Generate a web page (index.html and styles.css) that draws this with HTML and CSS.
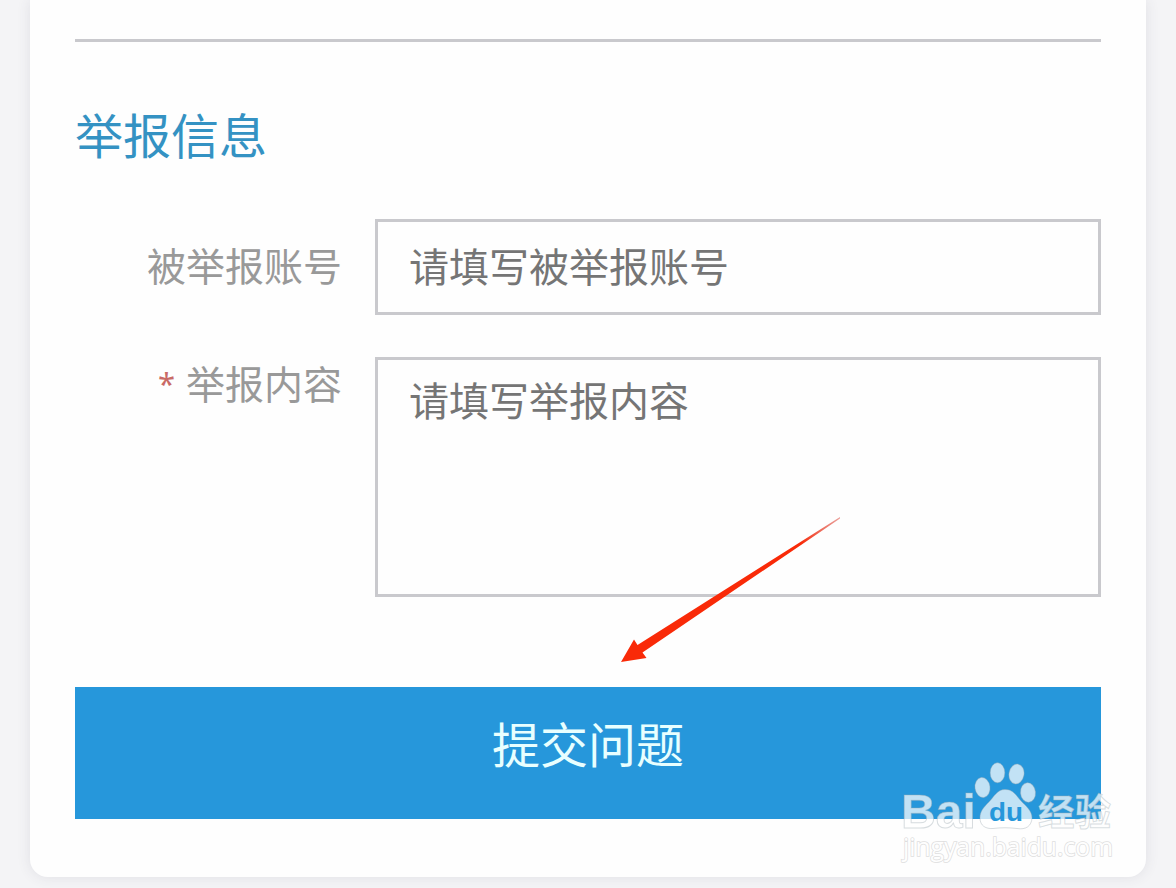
FILE: index.html
```html
<!DOCTYPE html>
<html lang="zh-CN">
<head>
<meta charset="utf-8">
<title>举报信息</title>
<link rel="stylesheet" href="styles.css">
</head>
<body>
<main class="card">
  <hr class="divider">
  <h2 class="title">举报信息</h2>
  <form class="form">
    <div class="row">
      <label class="label" for="account">被举报账号</label>
      <input class="field" id="account" type="text" placeholder="请填写被举报账号">
    </div>
    <div class="row">
      <label class="label label-content" for="content"><span class="required">*</span>举报内容</label>
      <textarea class="field field-area" id="content" placeholder="请填写举报内容"></textarea>
    </div>
    <button class="submit" type="button">提交问题</button>
  </form>
</main>
<svg class="overlay" viewBox="0 0 1176 888" aria-hidden="true">
  <defs>
    <linearGradient id="arrow" gradientUnits="userSpaceOnUse" x1="840" y1="517" x2="800" y2="543">
      <stop offset="0" stop-color="#d8453a" stop-opacity=".5"/>
      <stop offset="1" stop-color="#f92a08"/>
    </linearGradient>
  </defs>
  <path fill="url(#arrow)" d="M840 517L637.500 645L634 639.500L621 662L646.500 658L642.500 652.500L840 518.500Z"/>
  <g class="mark">
    <text class="mark-latin" x="901" y="828" textLength="75" lengthAdjust="spacingAndGlyphs">Bai</text>
    <ellipse cx="982.500" cy="787.500" rx="7.500" ry="10" transform="rotate(-8 982.500 787.500)"/>
    <ellipse cx="997.500" cy="772.800" rx="7.300" ry="10"/>
    <ellipse cx="1016.500" cy="774" rx="7.500" ry="10" transform="rotate(10 1016.500 774)"/>
    <ellipse cx="1028" cy="792.500" rx="7.500" ry="9.800" transform="rotate(-5 1028 792.500)"/>
    <path d="M1005 789.500C997 789.500 994 797 989 802C984 807 980 811 980 818C980 826 986 829 993 828.500C1001 827.500 1009 827.500 1017 828.500C1026 830 1031.500 826 1032 818C1032 811 1026 806 1021 801C1016 795 1013 789.500 1005 789.500Z"/>
    <text class="mark-cjk" x="1038" y="825.500" textLength="73" lengthAdjust="spacingAndGlyphs">经验</text>
    <text class="mark-du" x="989" y="820.500" textLength="34" lengthAdjust="spacingAndGlyphs">du</text>
  </g>
  <text class="mark-url" x="903" y="855.500" textLength="210" lengthAdjust="spacingAndGlyphs">jingyan.baidu.com</text>
</svg>
</body>
</html>
```
FILE: styles.css
```css
* {
  box-sizing: border-box;
}

body {
  margin: 0;
  height: 888px;
  overflow: hidden;
  background: #f4f4f6;
  font-family: "Noto Sans CJK SC", sans-serif;
}

.card {
  height: 877px;
  margin: 0 30px;
  padding: 39px 45px 0;
  background: #fefefe;
  border-radius: 0 0 18px 18px;
  box-shadow: 0 0 14px rgba(60, 60, 90, .11);
}

.divider {
  height: 3px;
  margin: 0;
  border: 0;
  background: #c9c9cd;
}

.title {
  margin: 55px 0 0;
  font-size: 48px;
  font-weight: 400;
  line-height: 72px;
  color: #3492c3;
}

.form {
  display: flex;
  flex-direction: column;
  gap: 42px;
  margin-top: 50px;
}

.row {
  display: flex;
  align-items: flex-start;
}

.label {
  width: 267px;
  margin-right: 33px;
  padding-top: 17px;
  font-size: 39px;
  line-height: 56px;
  text-align: right;
  color: #999;
  white-space: nowrap;
}

.label-content {
  padding-top: 0;
  margin-top: -3px;
}

.required {
  margin-right: 11px;
  font-family: "Noto Sans", sans-serif;
  font-size: 31px;
  line-height: 1;
  vertical-align: 4px;
  color: #c96a66;
}

.field {
  width: 726px;
  height: 96px;
  margin: 0;
  padding: 0 30px 5px 31px;
  border: 3px solid #c9c9cd;
  border-radius: 0;
  outline: none;
  background: #fefefe;
  font: 400 40px/58px "Noto Sans CJK SC", sans-serif;
  resize: none;
}

.field::placeholder {
  color: #757575;
  opacity: 1;
}

.field-area {
  display: block;
  height: 240px;
  padding-top: 10px;
}

.submit {
  height: 132px;
  margin: 48px 0 0;
  padding: 0 0 23px;
  border: 0;
  background: #2697db;
  font: 400 48px/72px "Noto Sans CJK SC", sans-serif;
  color: #e8ffff;
}

.overlay {
  position: absolute;
  top: 0;
  left: 0;
  width: 1176px;
  height: 888px;
  pointer-events: none;
}

.mark {
  fill: rgba(255, 255, 255, .72);
  stroke: #9dabb2;
  stroke-opacity: .4;
  stroke-width: 1;
}

.mark-latin {
  font: 700 48px "Liberation Sans", sans-serif;
}

.mark-cjk {
  font: 700 37px "Noto Sans CJK SC", sans-serif;
}

.mark-du {
  font: 700 26px "Liberation Sans", sans-serif;
  fill: #2697db;
  stroke: none;
}

.mark-url {
  font: 400 26px "Open Sans", sans-serif;
  fill: #fefefe;
  stroke: #dedede;
  stroke-width: 1.6;
  paint-order: stroke;
}
```
